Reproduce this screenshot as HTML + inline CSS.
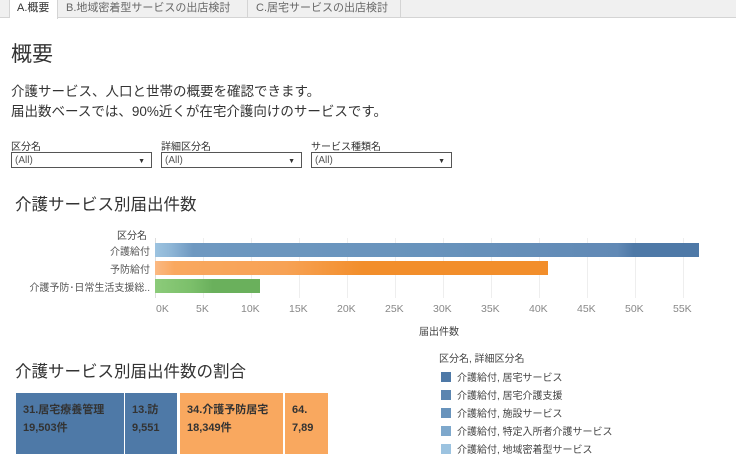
<!DOCTYPE html>
<html><head><meta charset="utf-8"><style>
*{margin:0;padding:0;box-sizing:border-box}
body{width:736px;height:454px;overflow:hidden;background:#fff;font-family:"Liberation Sans","Noto Sans CJK JP",sans-serif;color:#333;position:relative}
.a{position:absolute;white-space:nowrap}
.tabs{position:absolute;left:0;top:0;width:736px;height:18px;background:#f0f0f0;border-bottom:1px solid #d4d4d4}
.tab{position:absolute;top:0;height:18px;font-size:11px;line-height:17px;color:#666;border-right:1px solid #d4d4d4;padding-left:8px}
.sel{border:1px solid #555;height:16px;font-size:10px;line-height:15px;color:#555;padding-left:3px;background:#fff}
.sel:after{content:"▼";position:absolute;right:6px;top:1px;font-size:7px;color:#333}
.lab{font-size:10px;color:#333}
.grid{position:absolute;top:238px;width:1px;height:60px;background:#eee}
.ax{position:absolute;top:303px;font-size:10.5px;color:#888}
.yl{position:absolute;right:586px;font-size:10px;color:#555;text-align:right}
.leg{position:absolute;left:441px;font-size:10px;color:#444}
.leg i{display:inline-block;width:10px;height:10px;margin-right:6px;vertical-align:-1px}
.tm{position:absolute;top:393px;height:61px;font-size:11px;font-weight:bold;color:#333;padding:8px 0 0 7px;line-height:18px}
</style></head><body>
<div class="tabs">
<div class="tab" style="left:0;width:10px;padding:0"></div>
<div class="tab" style="left:10px;width:48px;background:#fff;color:#333;height:19px;padding-left:7px">A.概要</div>
<div class="tab" style="left:58px;width:190px">B.地域密着型サービスの出店検討</div>
<div class="tab" style="left:248px;width:153px">C.居宅サービスの出店検討</div>
</div>
<div class="a" style="left:11px;top:38px;font-size:21px;color:#333">概要</div>
<div class="a" style="left:11px;top:82px;font-size:13.5px;line-height:20px;color:#333">介護サービス、人口と世帯の概要を確認できます。<br>届出数ベースでは、90%近くが在宅介護向けのサービスです。</div>
<div class="a lab" style="left:11px;top:138px">区分名</div>
<div class="a lab" style="left:161px;top:138px">詳細区分名</div>
<div class="a lab" style="left:311px;top:138px">サービス種類名</div>
<div class="a sel" style="left:11px;top:152px;width:141px">(All)</div>
<div class="a sel" style="left:161px;top:152px;width:141px">(All)</div>
<div class="a sel" style="left:311px;top:152px;width:141px">(All)</div>
<div class="a" style="left:15px;top:191px;font-size:16.5px;color:#333">介護サービス別届出件数</div>
<div class="a" style="left:117px;top:227px;font-size:10px;color:#444">区分名</div>
<div class="grid" style="left:155px;background:#ddd"></div><div class="grid" style="left:203px"></div><div class="grid" style="left:251px"></div><div class="grid" style="left:299px"></div><div class="grid" style="left:347px"></div><div class="grid" style="left:395px"></div><div class="grid" style="left:443px"></div><div class="grid" style="left:491px"></div><div class="grid" style="left:539px"></div><div class="grid" style="left:587px"></div><div class="grid" style="left:635px"></div><div class="grid" style="left:683px"></div>
<div class="yl" style="top:243px">介護給付</div>
<div class="yl" style="top:261px">予防給付</div>
<div class="yl" style="top:279px">介護予防･日常生活支援総..</div>
<div class="a" style="left:155px;top:243px;width:544px;height:14px;background:linear-gradient(90deg,#9cc3e0 0,#8db5d6 3%,#6e98c0 7%,#6893bc 50%,#6189b5 85%,#4e79a7 88%)"></div>
<div class="a" style="left:155px;top:261px;width:393px;height:14px;background:linear-gradient(90deg,#fbb983 0,#f9a85f 5%,#f7a255 33%,#f28e2b 53%)"></div>
<div class="a" style="left:155px;top:279px;width:105px;height:14px;background:linear-gradient(90deg,#8ccb7a 0,#7bbf6a 35%,#6ab05c 55%)"></div>
<div class="ax" style="left:156px">0K</div><div class="ax" style="left:196px">5K</div><div class="ax" style="left:241px">10K</div><div class="ax" style="left:289px">15K</div><div class="ax" style="left:337px">20K</div><div class="ax" style="left:385px">25K</div><div class="ax" style="left:433px">30K</div><div class="ax" style="left:481px">35K</div><div class="ax" style="left:529px">40K</div><div class="ax" style="left:577px">45K</div><div class="ax" style="left:625px">50K</div><div class="ax" style="left:673px">55K</div>
<div class="a" style="left:419px;top:323px;font-size:10px;color:#444">届出件数</div>
<div class="a" style="left:15px;top:358px;font-size:16.5px;color:#333">介護サービス別届出件数の割合</div>
<div class="tm" style="left:16px;width:108px;background:#4e79a7">31.居宅療養管理<br>19,503件</div>
<div class="tm" style="left:125px;width:52px;background:#4e79a7">13.訪<br>9,551</div>
<div class="tm" style="left:180px;width:103px;background:#f9a85f">34.介護予防居宅<br>18,349件</div>
<div class="tm" style="left:285px;width:43px;background:#f9a85f">64.<br>7,89</div>
<div class="a" style="left:439px;top:350px;font-size:10px;color:#444">区分名, 詳細区分名</div>
<div class="leg" style="top:369px"><i style="background:#4e79a7"></i>介護給付, 居宅サービス</div>
<div class="leg" style="top:387px"><i style="background:#5b85b0"></i>介護給付, 居宅介護支援</div>
<div class="leg" style="top:405px"><i style="background:#6893bc"></i>介護給付, 施設サービス</div>
<div class="leg" style="top:423px"><i style="background:#7ea8cc"></i>介護給付, 特定入所者介護サービス</div>
<div class="leg" style="top:441px"><i style="background:#9cc3e0"></i>介護給付, 地域密着型サービス</div>
</body></html>
